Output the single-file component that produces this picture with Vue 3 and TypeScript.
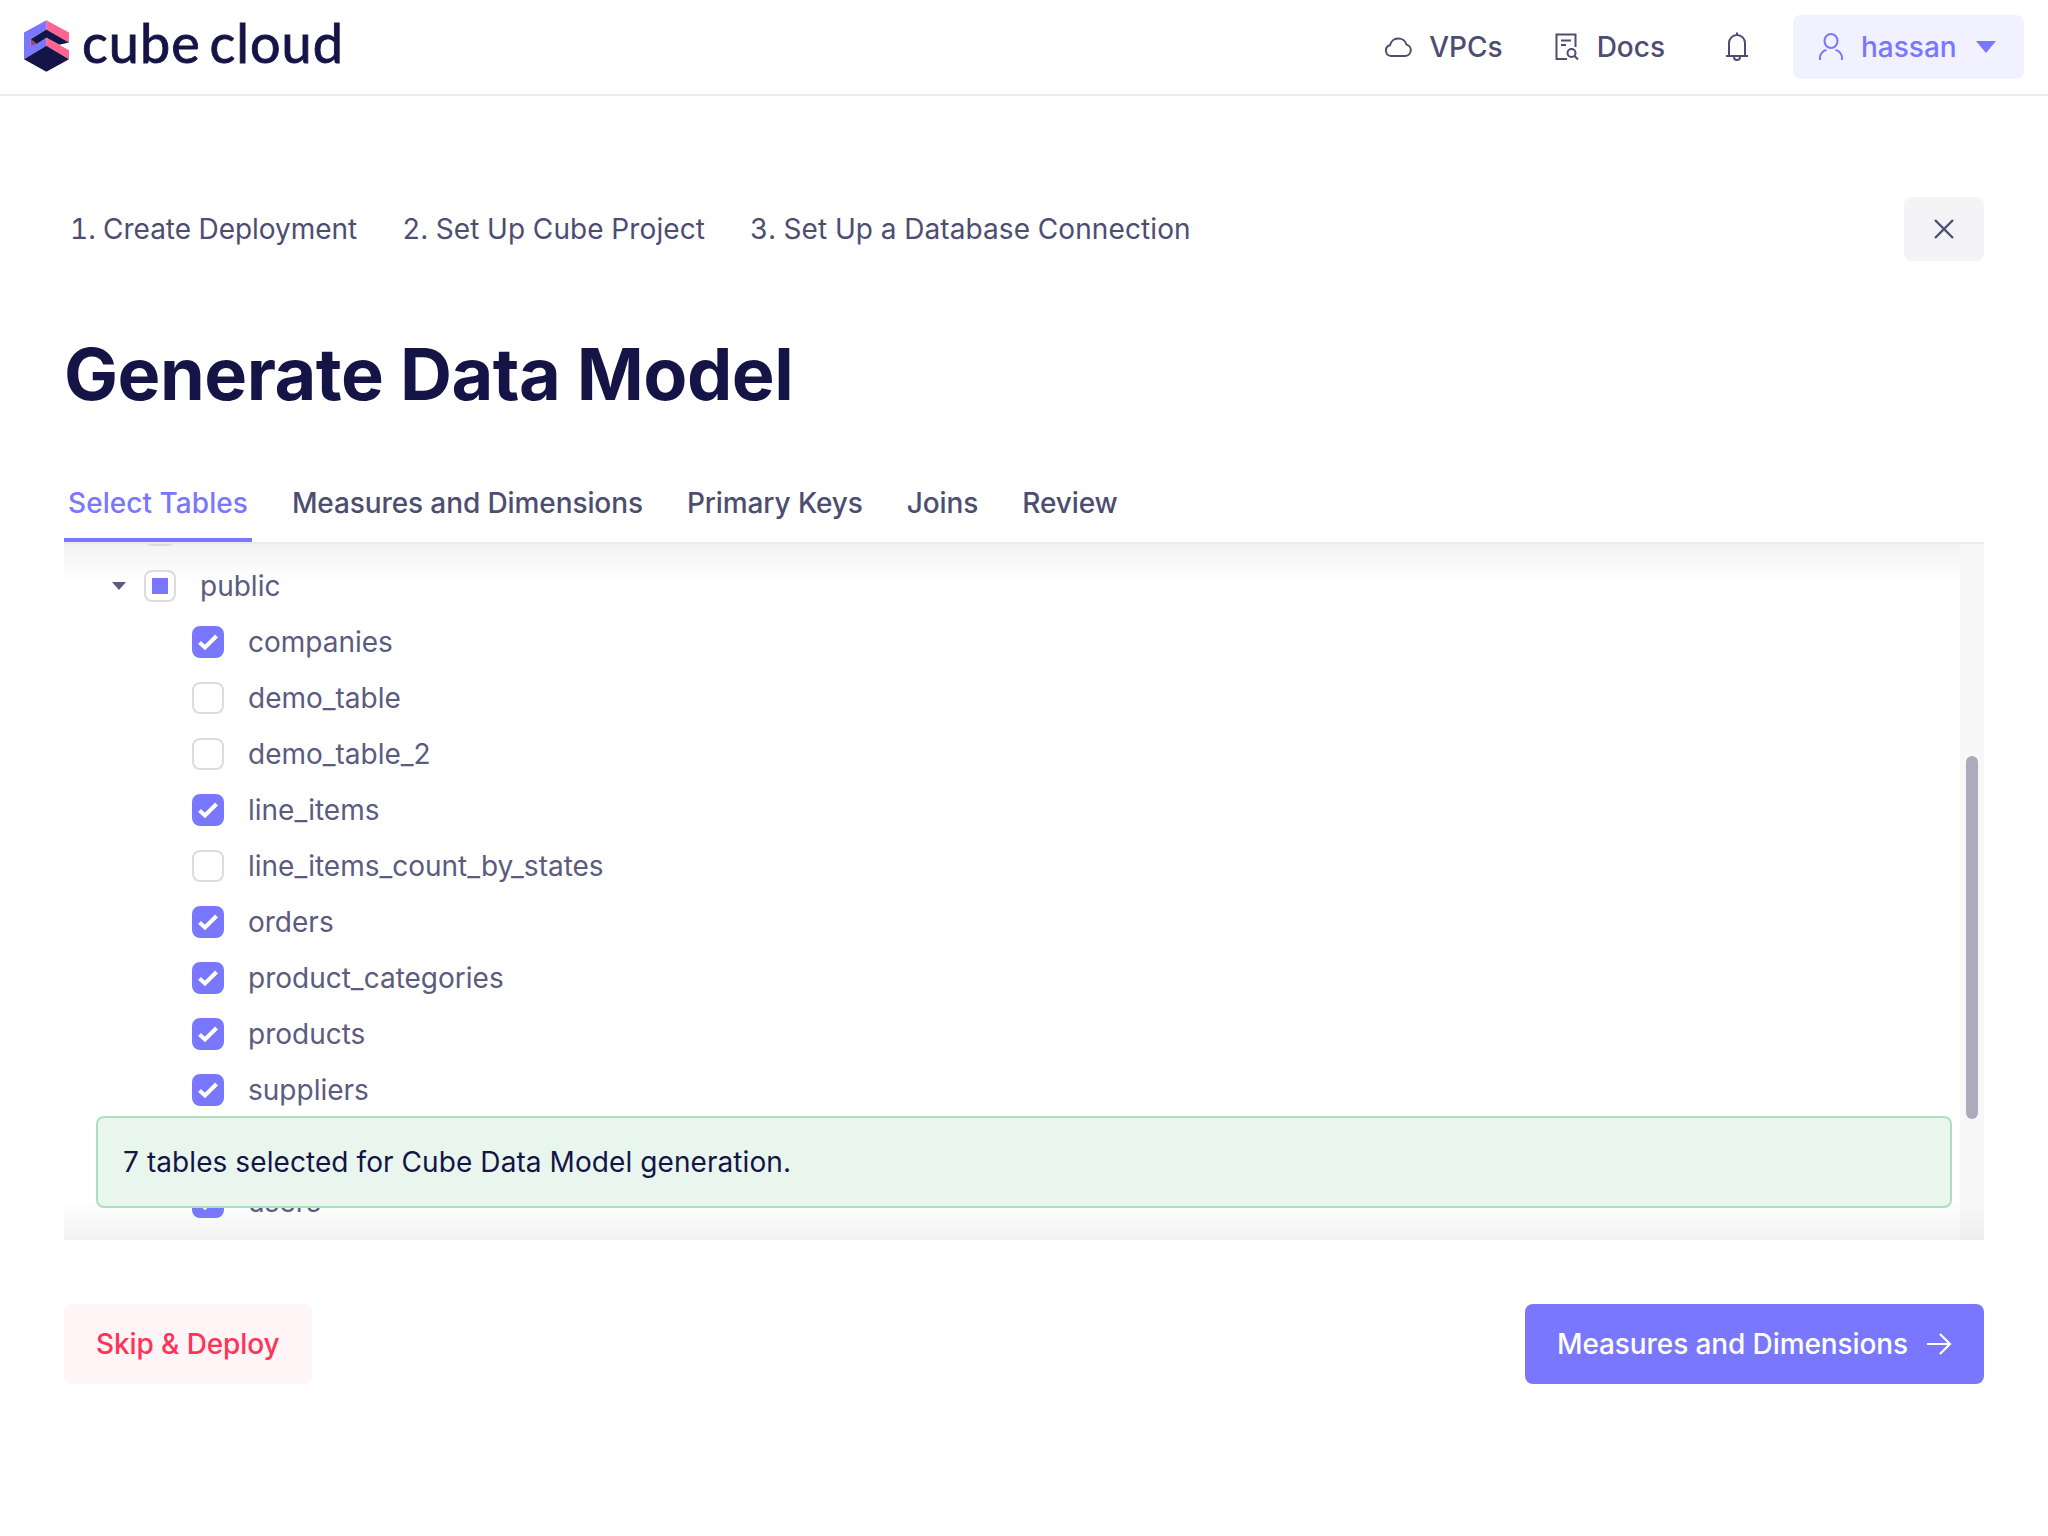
<script setup lang="ts">
interface Row { name: string; checked: boolean; hidden?: boolean }
const steps: string[] = ['1. Create Deployment', '2. Set Up Cube Project', '3. Set Up a Database Connection']
const tabs: string[] = ['Select Tables', 'Measures and Dimensions', 'Primary Keys', 'Joins', 'Review']
const rows: Row[] = [
  { name: 'companies', checked: true },
  { name: 'demo_table', checked: false },
  { name: 'demo_table_2', checked: false },
  { name: 'line_items', checked: true },
  { name: 'line_items_count_by_states', checked: false },
  { name: 'orders', checked: true },
  { name: 'product_categories', checked: true },
  { name: 'products', checked: true },
  { name: 'suppliers', checked: true },
  { name: '', checked: false, hidden: true },
  { name: 'users', checked: true },
]
</script>

<template>
  <div class="page">
    <header class="topbar">
      <div class="brand">
        <svg class="logo" viewBox="72 63 135 155" width="45" height="52">
          <polygon fill="#7a77ff" points="139,63 72,100 72,180 139,140 139,116 92,140 92,120 139,91" />
          <polygon fill="#a2416f" points="92,120 110,134 92,140" />
          <polygon fill="#ff6492" points="139,63 207,100 207,130 139,91" />
          <polygon fill="#141446" points="139,91 207,130 178,137 139,116 110,134 92,120" />
          <polygon fill="#ff6492" points="139,116 207,153 207,180 139,140" />
          <polygon fill="#141446" points="72,180 139,140 207,180 139,218" />
        </svg>
        <span class="wordmark">cube cloud</span>
      </div>
      <nav class="nav">
        <a class="nav-item vpcs">
          <svg width="28" height="20" viewBox="0 0 28 20" fill="none" stroke="#4d4d71" stroke-width="2">
            <path d="M7 19h14a5.800 5.800 0 0 0 1.500-11.400A8.500 8.500 0 0 0 6 8.200 5.500 5.500 0 0 0 7 19z" />
          </svg>
          <span>VPCs</span>
        </a>
        <a class="nav-item docs">
          <svg width="24" height="28" viewBox="0 0 24 28" fill="none" stroke="#4d4d71" stroke-width="2">
            <path d="M12 26H1.500V1.500h19V14" />
            <path d="M6 7.500h10M6 12h5" />
            <circle cx="16.500" cy="20" r="4" />
            <path d="M19.500 23l3.500 3.500" />
          </svg>
          <span>Docs</span>
        </a>
        <a class="bell">
          <svg width="24" height="30" viewBox="0 0 24 30" fill="none" stroke="#4d4d71" stroke-width="2">
            <path d="M1 24h22M4 24V11a8 8 0 0 1 16 0v13" />
            <path d="M12 0.500v2.500M9 25a3 3 0 0 0 6 0" />
          </svg>
        </a>
        <button class="user">
          <svg width="24" height="28" viewBox="0 0 24 28" fill="none" stroke="#7a77ff" stroke-width="2">
            <ellipse cx="12" cy="8" rx="6.500" ry="7" />
            <path d="M1 27v-2a8 8 0 0 1 6.500-8M23 27v-2a8 8 0 0 0-6.500-8" />
          </svg>
          <span class="user-name">hassan</span>
          <span class="caret"></span>
        </button>
      </nav>
    </header>

    <main class="main">
      <div class="steps-row">
        <ol class="steps">
          <li v-for="s in steps" :key="s">{{ s }}</li>
        </ol>
        <button class="close" aria-label="Close">
          <svg width="20" height="20" viewBox="0 0 20 20" fill="none" stroke="#4d4d71" stroke-width="2.400">
            <path d="M1 1l18 18M19 1L1 19" />
          </svg>
        </button>
      </div>

      <h1 class="title">Generate Data Model</h1>

      <div class="tabs">
        <div v-for="(t, i) in tabs" :key="t" class="tab" :class="{ active: i === 0 }">{{ t }}</div>
      </div>

      <section class="panel">
        <div class="fade-top"></div>
        <div class="fade-bottom"></div>
        <div class="tree">
          <div class="row level-1"><span class="box"></span></div>
          <div class="row level-1">
            <span class="toggle"></span>
            <span class="box"><span class="partial"></span></span>
            <span class="label">public</span>
          </div>
          <div v-for="(r, i) in rows" :key="i" class="row level-2">
            <template v-if="!r.hidden">
              <span class="box" :class="{ checked: r.checked }">
                <svg v-if="r.checked" width="20" height="16" viewBox="0 0 20 16" fill="none" stroke="#fff" stroke-width="4">
                  <path d="M1.500 8.500l5.500 5L18.500 2" />
                </svg>
              </span>
              <span class="label">{{ r.name }}</span>
            </template>
          </div>
        </div>
        <div class="track"><div class="thumb"></div></div>
        <div class="alert">7 tables selected for Cube Data Model generation.</div>
      </section>

      <footer class="actions">
        <button class="btn skip">Skip &amp; Deploy</button>
        <button class="btn primary">
          Measures and Dimensions
          <svg width="26" height="24" viewBox="0 0 26 24" fill="none" stroke="#fff" stroke-width="2.200">
            <path d="M1 12h23M14 2l10 10-10 10" />
          </svg>
        </button>
      </footer>
    </main>
  </div>
</template>

<style scoped>
.page {
  width: 2048px;
  height: 1536px;
  background: #fff;
  font-family: Inter, "Liberation Sans", sans-serif;
  font-size: 28px;
  color: #4d4d71;
  overflow: hidden;
}
.topbar {
  height: 96px;
  box-sizing: border-box;
  border-bottom: 2px solid #e9e9ef;
  display: flex;
  align-items: center;
  justify-content: space-between;
  padding: 0 24px;
}
.brand {
  display: flex;
  align-items: center;
  gap: 13px;
  margin-top: -2px;
}
.wordmark {
  font-family: Lato, sans-serif;
  font-size: 54px;
  font-weight: 400;
  -webkit-text-stroke: 0.9px #141446;
  letter-spacing: 1px;
  word-spacing: -6px;
  color: #141446;
  line-height: 1;
  margin-top: -6px;
}
.nav {
  display: flex;
  align-items: center;
}
.nav-item {
  display: flex;
  align-items: center;
  font-weight: 500;
}
.vpcs { gap: 17px; }
.docs { gap: 18px; margin-left: 52px; }
.bell { display: flex; margin-left: 60px; }
.user {
  display: flex;
  align-items: center;
  width: 231px;
  height: 64px;
  box-sizing: border-box;
  padding: 0 0 0 26px;
  margin-left: 44px;
  border: 0;
  border-radius: 8px;
  background: #f1f1ff;
  color: #7a77ff;
  font: 500 28px Inter, sans-serif;
}
.user-name { margin-left: 18px; }
.caret {
  margin-left: 19px;
  width: 0;
  height: 0;
  border-left: 10px solid transparent;
  border-right: 10px solid transparent;
  border-top: 12px solid #7a77ff;
}
.main {
  padding: 101px 64px 0;
}
.steps-row {
  display: flex;
  align-items: center;
  justify-content: space-between;
  height: 64px;
}
.steps {
  list-style: none;
  display: flex;
  gap: 45px;
  margin: 0;
  padding: 0 0 0 6px;
  letter-spacing: 0.1px;
  font-variant-numeric: tabular-nums;
}
.steps li:first-child {
  letter-spacing: -0.03px;
}
.close {
  width: 80px;
  height: 64px;
  display: flex;
  align-items: center;
  justify-content: center;
  border: 0;
  border-radius: 8px;
  background: #f4f4f7;
}
.title {
  margin: 69px 0 0;
  font-size: 72px;
  line-height: 88px;
  font-weight: 700;
  letter-spacing: -0.5px;
  color: #141446;
}
.tabs {
  display: flex;
  gap: 36px;
  margin-top: 54px;
  height: 72px;
  box-sizing: border-box;
  border-bottom: 2px solid #e9e9ef;
}
.tab {
  padding: 0 4px;
  height: 70px;
  line-height: 62px;
  box-sizing: border-box;
  font-weight: 500;
  letter-spacing: -0.1px;
}
.tab.active {
  color: #7a77ff;
  letter-spacing: 0.05px;
  border-bottom: 4px solid #7a77ff;
}
.panel {
  position: relative;
  height: 696px;
  overflow: hidden;
}
.tree {
  position: relative;
  margin-top: -42px;
  padding-left: 48px;
}
.row {
  display: flex;
  align-items: center;
  height: 56px;
  color: #5b5b7e;
}
.level-1 { padding-left: 32px; }
.level-2 { padding-left: 80px; }
.toggle {
  position: absolute;
  left: 48px;
  width: 0;
  height: 0;
  border-left: 7px solid transparent;
  border-right: 7px solid transparent;
  border-top: 8px solid #5b5b7e;
}
.box {
  width: 32px;
  height: 32px;
  box-sizing: border-box;
  border: 2px solid #dcdcdc;
  border-radius: 8px;
  display: flex;
  align-items: center;
  justify-content: center;
  background: #fff;
  flex: none;
}
.box.checked {
  background: #7a77ff;
  border-color: #7a77ff;
}
.partial {
  width: 16px;
  height: 16px;
  background: #7a77ff;
}
.label {
  margin-left: 24px;
}
.fade-top, .fade-bottom {
  position: absolute;
  left: 0;
  right: 24px;
  height: 40px;
  pointer-events: none;
}
.fade-top {
  top: 0;
  background: linear-gradient(#f3f3f3, rgba(255, 255, 255, 0));
}
.fade-bottom {
  bottom: 0;
  background: linear-gradient(rgba(255, 255, 255, 0), #f3f3f3);
}
.track {
  position: absolute;
  top: 0;
  right: 0;
  bottom: 0;
  width: 24px;
  background: linear-gradient(#f7f7f7 95%, #eeeeee);
}
.thumb {
  position: absolute;
  top: 212px;
  left: 6px;
  width: 12px;
  height: 363px;
  border-radius: 6px;
  background: #ababbb;
}
.alert {
  position: absolute;
  left: 32px;
  right: 32px;
  top: 572px;
  height: 92px;
  box-sizing: border-box;
  display: flex;
  align-items: center;
  padding-left: 25px;
  border: 2px solid #a8e0c0;
  border-radius: 8px;
  background: #e9f6ee;
  color: #141446;
  letter-spacing: 0.08px;
}
.actions {
  display: flex;
  justify-content: space-between;
  margin-top: 64px;
}
.btn {
  height: 80px;
  border: 0;
  border-radius: 8px;
  padding: 0 32px;
  font: 500 28px Inter, sans-serif;
  letter-spacing: -0.1px;
  display: flex;
  align-items: center;
}
.skip {
  background: #fff4f6;
  color: #ff3358;
}
.primary {
  background: #7a77ff;
  color: #fff;
  gap: 18px;
}
</style>
